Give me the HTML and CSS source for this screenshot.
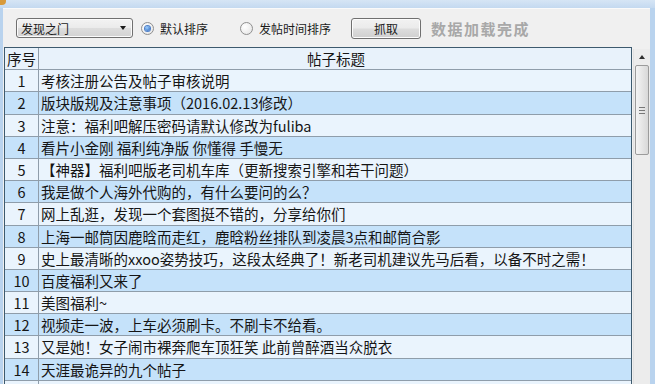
FILE: index.html
```html
<!DOCTYPE html>
<html lang="zh-CN">
<head>
<meta charset="UTF-8">
<title>帖子抓取</title>
<link rel="stylesheet" href="styles.css">
</head>
<body>
<div class="window">
  <div class="titlebar"><span class="app-icon"></span></div>
  <div class="client">
    <div class="toolbar">
      <div class="combo"><span class="combo-text">发现之门</span><span class="combo-arrow"></span></div>
      <label class="radio checked"><span class="radio-box"></span>默认排序</label>
      <label class="radio second"><span class="radio-box"></span>发帖时间排序</label>
      <button class="btn">抓取</button>
      <span class="status">数据加载完成</span>
    </div>
    <div class="list">
      <div class="table">
        <div class="cell num head">序号</div>
        <div class="cell title head">帖子标题</div>

        <div class="cell num">1</div><div class="cell title">考核注册公告及帖子审核说明</div>
        <div class="cell num alt">2</div><div class="cell title alt">版块版规及注意事项（2016.02.13修改）</div>
        <div class="cell num">3</div><div class="cell title">注意：福利吧解压密码请默认修改为fuliba</div>
        <div class="cell num alt">4</div><div class="cell title alt">看片小金刚 福利纯净版 你懂得 手慢无</div>
        <div class="cell num">5</div><div class="cell title">【神器】福利吧版老司机车库（更新搜索引擎和若干问题）</div>
        <div class="cell num alt">6</div><div class="cell title alt">我是做个人海外代购的，有什么要问的么？</div>
        <div class="cell num">7</div><div class="cell title">网上乱逛，发现一个套图挺不错的，分享给你们</div>
        <div class="cell num alt">8</div><div class="cell title alt">上海一邮筒因鹿晗而走红，鹿晗粉丝排队到凌晨3点和邮筒合影</div>
        <div class="cell num">9</div><div class="cell title">史上最清晰的xxoo姿势技巧，这段太经典了！新老司机建议先马后看，以备不时之需！</div>
        <div class="cell num alt">10</div><div class="cell title alt">百度福利又来了</div>
        <div class="cell num">11</div><div class="cell title">美图福利~</div>
        <div class="cell num alt">12</div><div class="cell title alt">视频走一波，上车必须刷卡。不刷卡不给看。</div>
        <div class="cell num">13</div><div class="cell title">又是她！女子闹市裸奔爬车顶狂笑 此前曾醉酒当众脱衣</div>
        <div class="cell num alt">14</div><div class="cell title alt">天涯最诡异的九个帖子</div>
        <div class="cell num"></div><div class="cell title"></div>
      </div>
      <div class="vscroll">
        <div class="arrow-up"></div>
        <div class="thumb"><span class="grip"></span></div>
      </div>
    </div>
  </div>
</div>
</body>
</html>
```

FILE: styles.css
```css
/* 窗口 */
body {
  margin: 0;
  width: 655px;
  height: 384px;
  overflow: hidden;
  font-family: "Noto Sans CJK SC", "Noto Sans", sans-serif;
  background: #b9d3ee;
}
.window {
  height: 384px;
  overflow: hidden;
}
.titlebar {
  height: 8px;
  background: linear-gradient(#d6e5f5, #c4d9f0);
  position: relative;
}
.app-icon {
  position: absolute;
  left: 0;
  top: 0;
  width: 6px;
  height: 5px;
  border-radius: 0 0 4px 0;
  background: #d89a3a;
}
.client {
  height: 375px;
  overflow: hidden;
  margin: 0 5px 0 3px;
  background: #f0f0f0;
  border-top: 1px solid #fafafa;
}

/* 工具栏 */
.toolbar {
  height: 38px;
  display: flex;
  align-items: center;
  font-size: 12px;
  color: #1b1b1b;
}
.combo {
  margin-left: 13px;
  width: 115px;
  height: 18px;
  border: 1px solid #707070;
  border-radius: 3px;
  background: linear-gradient(#f3f3f3 0%, #ebebeb 48%, #dddddd 52%, #d2d2d2 100%);
  display: flex;
  align-items: center;
  justify-content: space-between;
  box-shadow: inset 0 0 0 1px #fbfbfb;
}
.combo-text {
  margin-left: 4px;
}
.combo-arrow {
  margin-right: 6px;
  width: 0;
  height: 0;
  border-left: 3.5px solid transparent;
  border-right: 3.5px solid transparent;
  border-top: 4px solid #1a1a1a;
}
.radio {
  display: flex;
  align-items: center;
  margin-left: 8px;
}
.radio.second {
  margin-left: 32px;
}
.radio-box {
  width: 11px;
  height: 11px;
  border: 1px solid #8f8f8f;
  border-radius: 50%;
  background: radial-gradient(circle at 35% 35%, #ffffff, #e2e2e2);
  margin-right: 6px;
  display: flex;
  align-items: center;
  justify-content: center;
}
.radio.checked .radio-box::after {
  content: "";
  width: 5px;
  height: 5px;
  border-radius: 50%;
  background: radial-gradient(circle at 40% 35%, #9fd1ff, #1e5bb8);
  box-shadow: 0 0 0 1px #4d7fc8;
}
.btn {
  margin-left: 20px;
  width: 70px;
  height: 21px;
  font: inherit;
  color: #1b1b1b;
  border: 1px solid #707070;
  border-radius: 3px;
  background: linear-gradient(#f2f2f2 0%, #ebebeb 48%, #dddddd 52%, #cfcfcf 100%);
  box-shadow: inset 0 0 0 1px #fcfcfc;
  padding: 0;
}
.status {
  margin-left: 10px;
  font-size: 15px;
  font-weight: bold;
  letter-spacing: 1.5px;
  color: #a8a8a8;
}

/* 列表 */
.list {
  display: flex;
  align-items: flex-start;
  margin-left: 1px;
}
.table {
  width: 627px;
  height: 340px;
  overflow: hidden;
  border: 1px solid #3d5a6e;
  border-bottom: none;
  display: grid;
  grid-template-columns: 34px 1fr;
  grid-auto-rows: 22.2px;
}
.cell {
  border-bottom: 1px solid #8f9daa;
  background: #eaf4fd;
  font-size: 14.5px;
  line-height: 22px;
  color: #151515;
  white-space: nowrap;
  overflow: hidden;
}
.cell.alt {
  background: #c5e2fa;
}
.num {
  border-right: 1px solid #8f9daa;
  text-align: center;
}
.title {
  padding-left: 2px;
}
.head {
  background: #e8f2fb;
  font-size: 14.5px;
}
.title.head {
  text-align: center;
}

/* 滚动条 */
.vscroll {
  width: 16px;
  height: 336px;
  margin-top: 2px;
  margin-left: 1px;
  background: #ececec;
  border-left: 1px solid #e2e2e2;
}
.arrow-up {
  height: 15px;
  display: flex;
  align-items: center;
  justify-content: center;
}
.arrow-up::after {
  content: "";
  width: 0;
  height: 0;
  border-left: 3.5px solid transparent;
  border-right: 3.5px solid transparent;
  border-bottom: 4px solid #303030;
}
.thumb {
  margin: 1px 1px 0 1px;
  height: 88px;
  border: 1px solid #9b9b9b;
  border-radius: 2px;
  background: linear-gradient(90deg, #f4f4f4, #e6e6e6 50%, #d8d8d8);
  display: flex;
  align-items: center;
  justify-content: center;
}
.grip {
  width: 6px;
  height: 5px;
  border-top: 1px solid #777;
  border-bottom: 1px solid #777;
  position: relative;
}
.grip::after {
  content: "";
  position: absolute;
  left: 0;
  right: 0;
  top: 2px;
  border-top: 1px solid #777;
}
```
